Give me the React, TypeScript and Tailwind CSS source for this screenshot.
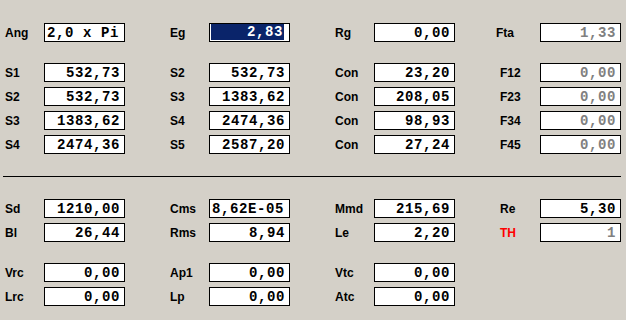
const val = "font-['Liberation_Mono',monospace] font-bold text-[14px] tracking-[0.6px] leading-none";

type CellProps = {
    label?: string;
    value?: string;
    gray?: boolean;
    left?: boolean;
    red?: boolean;
    selected?: boolean;
    labelClass?: string;
};

const Cell = ({ label, value, gray, left, red, selected, labelClass }: CellProps) => {
    if (!label) return <div className="w-[165px] shrink-0" />;
    return (
        <div className="w-[165px] shrink-0 flex items-center">
            <span
                className={`w-[39px] shrink-0 text-[12px] font-bold font-['Liberation_Sans',Arial,sans-serif] ${red ? 'text-[#ff0000]' : 'text-black'} ${labelClass ?? ''}`}
            >
                {label}
            </span>
            {selected ? (
                <div className="w-[81px] h-[19px] shrink-0 border border-black bg-white flex pl-[1px] pr-[5px] pb-[1px]">
                    <span className={`flex-1 bg-[#0a246a] text-white flex items-center justify-end pr-[1px] ${val}`}>{value}</span>
                </div>
            ) : (
                <div
                    className={`w-[81px] h-[19px] shrink-0 border border-black bg-white flex items-center ${left ? 'justify-start pl-[2px]' : 'justify-end pr-[4px]'} ${gray ? 'text-[#808080]' : 'text-black'} ${val}`}
                >
                    {value}
                </div>
            )}
        </div>
    );
};

const Row = ({ children, className }: { children: React.ReactNode; className?: string }) => (
    <div className={`flex h-[19px] ${className ?? ''}`}>{children}</div>
);

export default function App() {
    return (
        <div className="w-[626px] h-[320px] bg-[#d4d0c8] pt-[23px] overflow-hidden">
            <div className="pl-[5px]">
                <Row>
                    <Cell label="Ang" value="2,0 x Pi" left />
                    <Cell label="Eg" value="2,83" selected />
                    <Cell label="Rg" value="0,00" />
                    <Cell label="Fta" value="1,33" gray labelClass="-ml-[4px] w-[44px]" />
                </Row>
                <div className="flex flex-col gap-[5px] mt-[21px]">
                    <Row>
                        <Cell label="S1" value="532,73" />
                        <Cell label="S2" value="532,73" />
                        <Cell label="Con" value="23,20" />
                        <Cell label="F12" value="0,00" gray labelClass="w-[40px]" />
                    </Row>
                    <Row>
                        <Cell label="S2" value="532,73" />
                        <Cell label="S3" value="1383,62" />
                        <Cell label="Con" value="208,05" />
                        <Cell label="F23" value="0,00" gray labelClass="w-[40px]" />
                    </Row>
                    <Row>
                        <Cell label="S3" value="1383,62" />
                        <Cell label="S4" value="2474,36" />
                        <Cell label="Con" value="98,93" />
                        <Cell label="F34" value="0,00" gray labelClass="w-[40px]" />
                    </Row>
                    <Row>
                        <Cell label="S4" value="2474,36" />
                        <Cell label="S5" value="2587,20" />
                        <Cell label="Con" value="27,24" />
                        <Cell label="F45" value="0,00" gray labelClass="w-[40px]" />
                    </Row>
                </div>
            </div>

            <div className="mt-[22px] ml-[3px] w-[618px] h-px bg-black" />

            <div className="pl-[5px]">
                <div className="flex flex-col gap-[5px] mt-[22px]">
                    <Row>
                        <Cell label="Sd" value="1210,00" />
                        <Cell label="Cms" value="8,62E-05" left />
                        <Cell label="Mmd" value="215,69" />
                        <Cell label="Re" value="5,30" labelClass="w-[40px]" />
                    </Row>
                    <Row>
                        <Cell label="Bl" value="26,44" />
                        <Cell label="Rms" value="8,94" />
                        <Cell label="Le" value="2,20" />
                        <Cell label="TH" value="1" gray red labelClass="w-[40px]" />
                    </Row>
                </div>
                <div className="flex flex-col gap-[5px] mt-[21px]">
                    <Row>
                        <Cell label="Vrc" value="0,00" />
                        <Cell label="Ap1" value="0,00" />
                        <Cell label="Vtc" value="0,00" />
                        <Cell />
                    </Row>
                    <Row>
                        <Cell label="Lrc" value="0,00" />
                        <Cell label="Lp" value="0,00" />
                        <Cell label="Atc" value="0,00" />
                        <Cell />
                    </Row>
                </div>
            </div>
        </div>
    );
}
